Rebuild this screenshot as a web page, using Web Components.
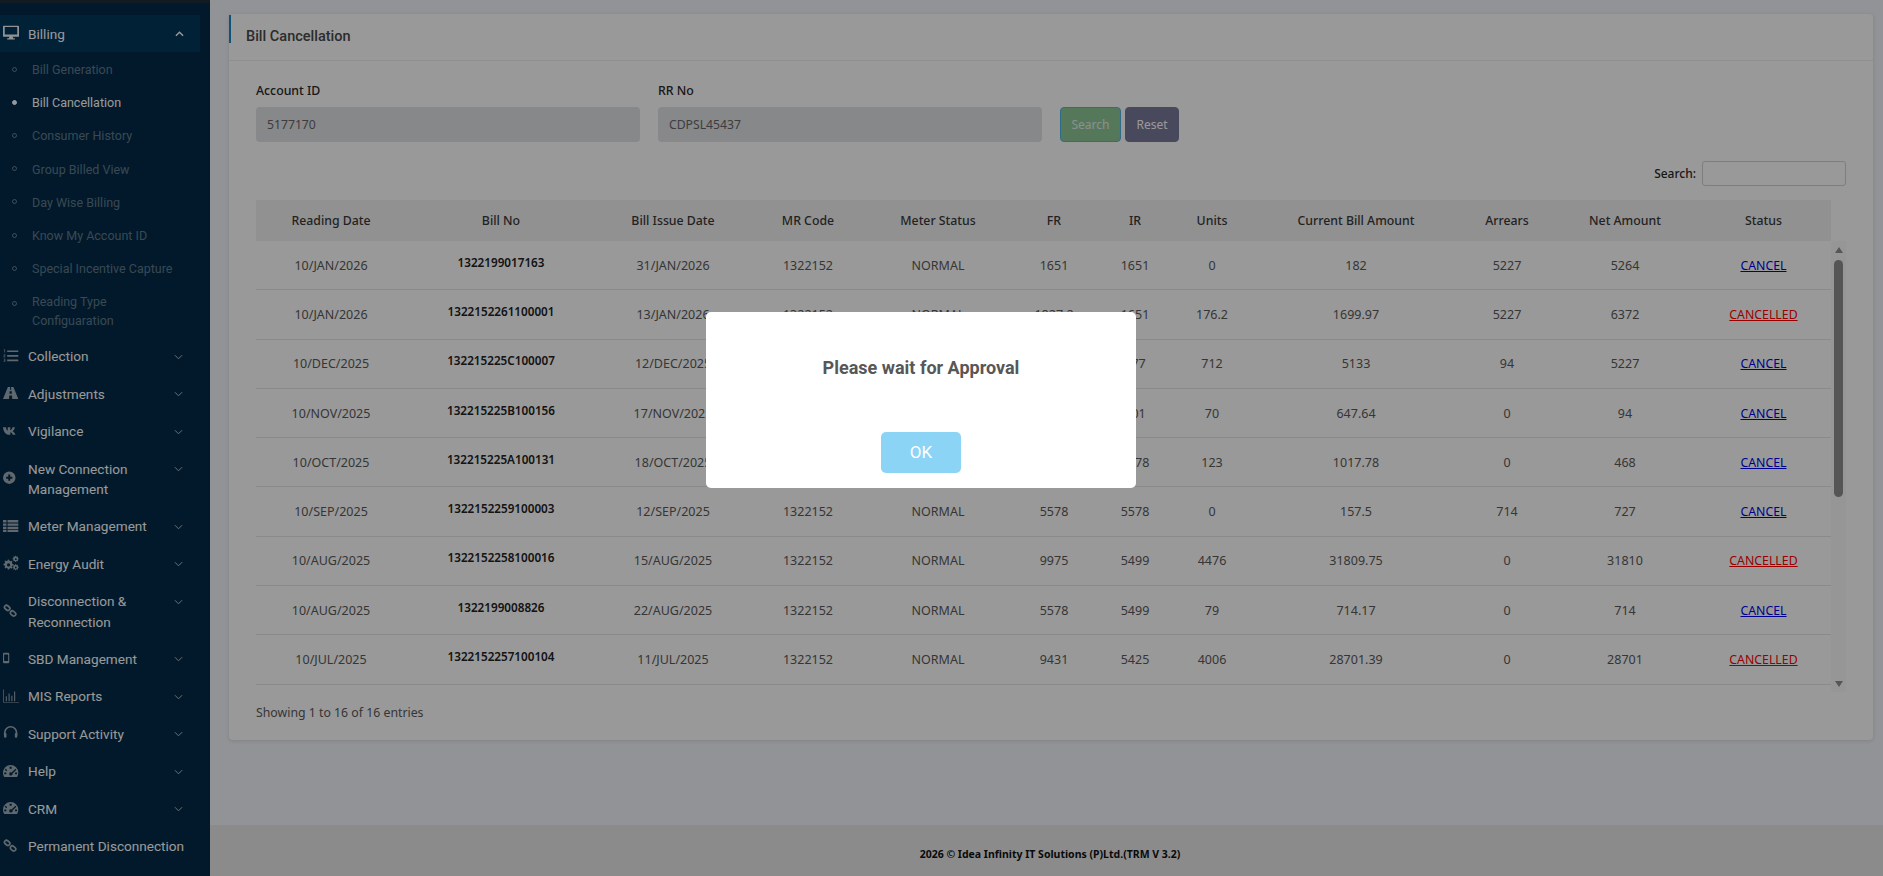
<!DOCTYPE html>
<html lang="en">
<head>
<meta charset="utf-8">
<title>Bill Cancellation</title>
<style>
  html, body { margin: 0; height: 100%; }
  body { font-family: "Noto Sans", sans-serif; overflow: hidden; }
</style>
</head>
<body>
<app-shell>
  <app-sidebar slot="side"></app-sidebar>
  <bill-card slot="main" title-text="Bill Cancellation"></bill-card>
  <app-footer slot="foot">2026 © Idea Infinity IT Solutions (P)Ltd.(TRM V 3.2)</app-footer>
</app-shell>
<alert-modal message="Please wait for Approval" confirm="OK"></alert-modal>

<script>
const ICONS = {
  desktop: `<path fill-rule="evenodd" d="M1 1h21a1 1 0 0 1 1 1v14a1 1 0 0 1-1 1h-8l.6 2.200H17V21H6v-1.800h2.400L9 17H1a1 1 0 0 1-1-1V2a1 1 0 0 1 1-1zm1.500 2v10.500h18V3z"/>`,
  listol: `<path d="M6 3.500h16v2.400H6zM6 10h16v2.400H6zM6 16.500h16v2.400H6z"/><path d="M1 2h2v4.600H2V3H1zM.8 9.500h2.500v2.200H1.800v.7h1.500v.8H.8v-2.200h1.500V10H.8zM.8 15.500h2.500v4.200H.8v-.8h1.500v-.9H1.300v-.7h1v-1H.8z"/>`,
  road: `<path d="M7 3h3.400l-.3 4h1.800l-.3-4H15l7 17h-8.700l-.4-5H9.100l-.4 5H0zm2.500 6-.2 3.600h3.400L12.500 9z"/>`,
  vk: `<path d="M0 6h4.200c.3 2.200 1.300 4.500 2.600 5.200V6h3.700v4.600c1.300-.6 2.700-2.500 3.200-4.600h3.500c-.5 2.800-2.200 4.800-3.500 5.800 1.300.7 3.300 2.400 4.300 5.200h-3.900c-.7-1.800-2.100-3.300-3.600-3.600V17H9.800C4.200 17 .6 13 0 6z"/>`,
  plus: `<path fill-rule="evenodd" d="M9 2a9 9 0 1 1 0 18A9 9 0 0 1 9 2zM7.600 6.500v3.100H4.500v2.800h3.100v3.100h2.800v-3.100h3.100V9.600h-3.100V6.500z"/>`,
  thlist: `<path d="M0 3h5v3.400H0zM6.500 3H22v3.400H6.500zM0 7.800h5v3.400H0zM6.500 7.800H22v3.400H6.500zM0 12.600h5V16H0zM6.500 12.600H22V16H6.500zM0 17.400h5v2.600H0zM6.500 17.400H22v2.600H6.500z"/>`,
  cogs: `<path fill-rule="evenodd" d="M7 6.500l1.800.2.500 1.700 1.500.7 1.500-.9 1.300 1.300-.9 1.500.7 1.500 1.700.5v1.900l-1.700.5-.7 1.500.9 1.500-1.300 1.300-1.500-.9-1.500.7-.5 1.400H7l-.5-1.700-1.500-.7-1.500.9-1.300-1.300.9-1.500-.7-1.500-1.700-.5v-1.900l1.700-.5.7-1.500-.9-1.500 1.300-1.300 1.500.9 1.500-.7zM8 12a2.300 2.300 0 1 0 0 4.600A2.300 2.300 0 0 0 8 12z"/><path fill-rule="evenodd" d="M18 1l.8.1.2 1 1 .5.9-.5.8.8-.5.9.4 1 1 .2v1.200l-1 .2-.4 1 .5.9-.8.8-.9-.5-1 .4-.2 1h-1.200l-.2-1-1-.4-.9.5-.8-.8.5-.9-.4-1-1-.2V4.800l1-.2.4-1-.5-.9.8-.8.9.5 1-.4.200-1zm.4 3.700a1.300 1.300 0 1 0 0 2.600 1.300 1.300 0 0 0 0-2.600z"/><path fill-rule="evenodd" d="M18 13l.8.1.2 1 1 .5.9-.5.8.8-.5.9.4 1 1 .2v1.200l-1 .2-.4 1 .5.9-.8.8-.9-.5-1 .4-.2 1h-1.200l-.2-1-1-.4-.9.5-.8-.8.5-.9-.4-1-1-.2v-1.200l1-.2.4-1-.5-.9.8-.8.9.5 1-.4.200-1zm.4 3.700a1.300 1.300 0 1 0 0 2.600 1.300 1.300 0 0 0 0-2.600z"/>`,
  link: `<g fill="none" stroke="currentColor" stroke-width="2.400"><rect x="-4.200" y="-2.800" width="8.400" height="5.600" rx="2.800" transform="translate(6 7) rotate(40)"/><rect x="-4.200" y="-2.800" width="8.400" height="5.600" rx="2.800" transform="translate(14.500 15) rotate(40)"/></g>`,
  mobile: `<path fill-rule="evenodd" d="M1.500 4h6A1.500 1.500 0 0 1 9 5.500v12A1.500 1.500 0 0 1 7.500 19h-6A1.500 1.500 0 0 1 0 17.500v-12A1.500 1.500 0 0 1 1.500 4zm.1 2.300v9.400h5.800V6.300z"/>`,
  chart: `<path d="M0 2h1v18h22v1H0z"/><path d="M4 12h1.500v7H4zM8 8h1.500v11H8zM12 11h1.500v8H12zM16 5h1.500v14H16z"/>`,
  headset: `<path fill="none" stroke="currentColor" stroke-width="2.400" d="M2.500 15v-4a8.500 8.500 0 0 1 17 0v4"/><rect x="1.500" y="11.500" width="3.500" height="7" rx="1.500"/><rect x="17" y="11.500" width="3.500" height="7" rx="1.500"/>`,
  gauge: `<path fill-rule="evenodd" d="M11 3a11 11 0 0 1 11 11c0 2.400-.7 4.500-2 6.300H2C.7 18.500 0 16.400 0 14A11 11 0 0 1 11 3zM9.500 5.500v2.800h3V5.500zM4 8.300l-1.400 1.400 2 2 1.400-1.400zm14 0l-5.700 5.200a2.400 2.400 0 1 0 1.400 1.600l5.500-5.400zM1.800 13.500v2.800h3v-2.800zm15.400 0v2.800h3v-2.800z"/>`
};

const NAV = [
  { label: "Collection", icon: "listol" },
  { label: "Adjustments", icon: "road" },
  { label: "Vigilance", icon: "vk" },
  { label: "New Connection Management", icon: "plus", two: true },
  { label: "Meter Management", icon: "thlist" },
  { label: "Energy Audit", icon: "cogs" },
  { label: "Disconnection & Reconnection", icon: "link", two: true },
  { label: "SBD Management", icon: "mobile" },
  { label: "MIS Reports", icon: "chart" },
  { label: "Support Activity", icon: "headset" },
  { label: "Help", icon: "gauge" },
  { label: "CRM", icon: "gauge" },
  { label: "Permanent Disconnection", icon: "link", leaf: true }
];

const SUBS = ["Bill Generation", "Bill Cancellation", "Consumer History", "Group Billed View",
  "Day Wise Billing", "Know My Account ID", "Special Incentive Capture", "Reading Type Configuaration"];

const COLS = [150, 190, 154, 116, 144, 88, 74, 80, 208, 94, 142, 135];
const HEAD = ["Reading Date", "Bill No", "Bill Issue Date", "MR Code", "Meter Status", "FR", "IR", "Units",
  "Current Bill Amount", "Arrears", "Net Amount", "Status"];
// only the rows visible in the scroll area
const ROWS = [
  ["10/JAN/2026", "1322199017163", "31/JAN/2026", "1322152", "NORMAL", "1651", "1651", "0", "182", "5227", "5264", "CANCEL"],
  ["10/JAN/2026", "1322152261100001", "13/JAN/2026", "1322152", "NORMAL", "1827.2", "1651", "176.2", "1699.97", "5227", "6372", "CANCELLED"],
  ["10/DEC/2025", "132215225C100007", "12/DEC/2025", "1322152", "NORMAL", "1389", "677", "712", "5133", "94", "5227", "CANCEL"],
  ["10/NOV/2025", "132215225B100156", "17/NOV/2025", "1322152", "NORMAL", "671", "601", "70", "647.64", "0", "94", "CANCEL"],
  ["10/OCT/2025", "132215225A100131", "18/OCT/2025", "1322152", "NORMAL", "5701", "5578", "123", "1017.78", "0", "468", "CANCEL"],
  ["10/SEP/2025", "1322152259100003", "12/SEP/2025", "1322152", "NORMAL", "5578", "5578", "0", "157.5", "714", "727", "CANCEL"],
  ["10/AUG/2025", "1322152258100016", "15/AUG/2025", "1322152", "NORMAL", "9975", "5499", "4476", "31809.75", "0", "31810", "CANCELLED"],
  ["10/AUG/2025", "1322199008826", "22/AUG/2025", "1322152", "NORMAL", "5578", "5499", "79", "714.17", "0", "714", "CANCEL"],
  ["10/JUL/2025", "1322152257100104", "11/JUL/2025", "1322152", "NORMAL", "9431", "5425", "4006", "28701.39", "0", "28701", "CANCELLED"]
];

class AppShell extends HTMLElement {
  constructor() {
    super();
    this.attachShadow({ mode: "open" });
    this.shadowRoot.innerHTML = `
      <style>
        :host { display: grid; grid-template-columns: 210px 1fr; height: 876px; background: #f2f5fa; }
        .side { overflow: hidden; }
        .right { display: flex; flex-direction: column; min-width: 0; }
        .main { flex: 1; padding: 14px 10px 0 19px; min-height: 0; }
      </style>
      <div class="side"><slot name="side"></slot></div>
      <div class="right">
        <div class="main"><slot name="main"></slot></div>
        <slot name="foot"></slot>
      </div>
    `;
  }
}
customElements.define("app-shell", AppShell);

class AppSidebar extends HTMLElement {
  constructor() {
    super();
    this.attachShadow({ mode: "open" });
    const subs = SUBS.map((s, i) => `
      <li class="sub ${i === 1 ? "on" : ""} ${i === 7 ? "two" : ""}"><i></i><span>${s}</span></li>`).join("");
    const items = NAV.map((n) => `
      <li class="item ${n.two ? "two" : ""} ${n.leaf ? "leaf" : ""}">
        <svg class="ic" viewBox="0 0 23 23" fill="currentColor">${ICONS[n.icon]}</svg>
        <span>${n.label.replace("&", "&amp;")}</span>
        ${n.leaf ? "" : `<svg class="car" viewBox="0 0 10 6"><path d="M1 1l4 4 4-4" fill="none" stroke="currentColor" stroke-width="1.100"/></svg>`}
      </li>`).join("");
    this.shadowRoot.innerHTML = `
      <style>
        :host { display: block; height: 876px; background: #022b48; font-family: Roboto, sans-serif; color: #fff; border-top: 3px solid #1f2c3c; box-sizing: border-box; }
        ul { list-style: none; margin: 0; padding: 0; }
        .top { display: flex; align-items: center; height: 37px; margin: 12px 10px 0 0; background: #02375d; font-size: 13.600px; position: relative; }
        .top span { margin-left: 28px; }
        .top .ic { opacity: .95; left: 3px; top: 10px; margin: 0; }
        .ic { width: 16px; height: 16px; flex: none; position: absolute; left: 3px; top: 50%; margin-top: -9px; opacity: .62; }
        .car { width: 9px; height: 6px; position: absolute; right: 27px; color: #fff; }
        .top .car { right: 16px; top: 16px; }
        .subs { padding-top: 1px; }
        .items { padding-top: .5px; }
        .sub { position: relative; min-height: 33.200px; display: flex; align-items: center; padding-left: 32px; font-size: 12.500px; line-height: 19px; color: rgba(255,255,255,.38); }
        .sub span { white-space: nowrap; }
        .sub.two { min-height: 52px; }
        .sub.two span { white-space: normal; width: 110px; }
        .sub i { position: absolute; left: 12px; top: 50%; margin-top: -3px; width: 3px; height: 3px; border: 1px solid currentColor; border-radius: 50%; }
        .sub.two i { top: 19px; }
        .sub.on { color: #fff; }
        .sub.on i { background: #fff; }
        .item { position: relative; display: flex; align-items: center; min-height: 37.500px; padding-left: 28px; font-size: 13.600px; line-height: 20.400px; color: #fff; }
        .item span { width: 130px; }
        .item.leaf span { width: auto; white-space: nowrap; }
        .item.two { min-height: 57.500px; }
        .item .car { top: 16px; opacity: .7; }
      </style>
      <div class="top">
        <svg class="ic" viewBox="0 0 23 23" fill="currentColor">${ICONS.desktop}</svg>
        <span>Billing</span>
        <svg class="car" viewBox="0 0 10 6"><path d="M1 5l4-4 4 4" fill="none" stroke="currentColor" stroke-width="1.600"/></svg>
      </div>
      <ul class="subs">${subs}</ul>
      <ul class="items">${items}</ul>
    `;
  }
}
customElements.define("app-sidebar", AppSidebar);

class FormField extends HTMLElement {
  constructor() {
    super();
    this.attachShadow({ mode: "open" });
    this.shadowRoot.innerHTML = `
      <style>
        :host { display: block; width: 384px; }
        label { display: block; font-size: 12.300px; font-weight: 500; line-height: 18px; color: #2a2a2a; margin-bottom: 7px; }
        input { display: block; box-sizing: border-box; width: 100%; height: 35px; padding: 0 11px; border: 0; border-radius: 4px; background: #e2e3e6; font: 12.200px "Noto Sans", sans-serif; color: #666; }
      </style>
      <label>${this.getAttribute("label")}</label>
      <input value="${this.getAttribute("value")}" disabled>
    `;
  }
}
customElements.define("form-field", FormField);

class BillsTable extends HTMLElement {
  constructor() {
    super();
    this.attachShadow({ mode: "open" });
    const colgroup = `<colgroup>${COLS.map((w) => `<col style="width:${w}px">`).join("")}</colgroup>`;
    const head = HEAD.map((h) => `<th>${h}</th>`).join("");
    const rows = ROWS.map((r) => `<tr>${r.map((c, i) => {
      if (i === 1) return `<td><b>${c}</b></td>`;
      if (i === 11) return `<td><a class="${c === "CANCEL" ? "go" : "done"}">${c}</a></td>`;
      return `<td>${c}</td>`;
    }).join("")}</tr>`).join("");
    this.shadowRoot.innerHTML = `
      <style>
        :host { display: block; font-size: 12.500px; color: #5a5a5a; }
        .tools { display: flex; justify-content: flex-end; align-items: center; gap: 6px; height: 25px; font-size: 12px; font-weight: 500; color: #2a2a2a; margin-bottom: 14px; }
        .tools input { box-sizing: border-box; width: 144px; height: 25px; border: 1px solid #d3d3d3; border-radius: 3px; background: transparent; }
        table { table-layout: fixed; border-collapse: collapse; width: 1575px; }
        th { height: 41px; padding: 0; background: #f2f2f2; font-size: 12.300px; font-weight: 500; color: #3a3a3a; text-align: center; }
        td { height: 48.300px; padding: 0; text-align: center; border-bottom: 1px solid #e6e6e6; }
        td b { position: relative; top: -3px; font-size: 11.700px; font-weight: 600; color: #222; }
        a { text-decoration: underline; font-size: 12.300px; }
        a.go { color: #0000ee; }
        a.done { color: #ff0000; }
        .wrap { display: flex; height: 451px; align-items: flex-start; }
        .bar { width: 15px; height: 100%; background: #fbfbfb; display: flex; flex-direction: column; align-items: center; padding-top: 6px; box-sizing: border-box; }
        .bar i { display: block; width: 0; height: 0; border: 4.500px solid transparent; border-top: 0; border-bottom: 6px solid #8f8f8f; }
        .bar i.dn { border-bottom: 0; border-top: 6px solid #8f8f8f; margin-top: auto; margin-bottom: 5px; }
        .bar u { display: block; width: 9px; height: 237px; margin-top: 7px; border-radius: 5px; background: #8e8e8e; }
        .note { margin-top: 12px; font-size: 12.300px; line-height: 18px; color: #5a5a5a; }
      </style>
      <div class="tools"><span>Search:</span><input></div>
      <table>${colgroup}<tr>${head}</tr></table>
      <div class="wrap">
        <table>${colgroup}${rows}</table>
        <div class="bar"><i></i><u></u><i class="dn"></i></div>
      </div>
      <div class="note">Showing 1 to 16 of 16 entries</div>
    `;
  }
}
customElements.define("bills-table", BillsTable);

class BillCard extends HTMLElement {
  constructor() {
    super();
    this.attachShadow({ mode: "open" });
    this.shadowRoot.innerHTML = `
      <style>
        :host { display: block; height: 726px; background: #fff; border-radius: 4px; box-shadow: 0 1px 4px rgba(0,0,0,.12); }
        .hd { position: relative; box-sizing: border-box; height: 47px; padding-bottom: 2px; display: flex; align-items: center; padding-left: 17px; border-bottom: 1px solid #eee; font: 500 14.500px Roboto, sans-serif; color: #4a4a4a; }
        .hd::before { content: ""; position: absolute; left: 0; top: 1px; width: 2px; height: 28px; background: #1f87c9; }
        .bd { padding: 21px 27px 0; }
        .form { display: flex; gap: 18px; align-items: flex-end; margin-bottom: 19px; }
        .btns { display: flex; gap: 4px; }
        button { height: 35px; border: 1px solid transparent; border-radius: 4px; padding: 0; color: #fff; font: 12px "Noto Sans", sans-serif; }
        .s { width: 61px; background: #8ec996; border-color: #50b4e6; color: #ededed; }
        .r { width: 54px; background: #787b99; border-color: #787b99; }
      </style>
      <div class="hd">${this.getAttribute("title-text")}</div>
      <div class="bd">
        <div class="form">
          <form-field label="Account ID" value="5177170"></form-field>
          <form-field label="RR No" value="CDPSL45437"></form-field>
          <div class="btns"><button class="s">Search</button><button class="r">Reset</button></div>
        </div>
        <bills-table></bills-table>
      </div>
    `;
  }
}
customElements.define("bill-card", BillCard);

class AppFooter extends HTMLElement {
  constructor() {
    super();
    this.attachShadow({ mode: "open" });
    this.shadowRoot.innerHTML = `
      <style>
        :host { display: flex; height: 51px; flex: none; align-items: center; justify-content: center; background: #e8e8e8; font: 700 10.500px "Noto Sans", sans-serif; color: #111; box-sizing: border-box; padding: 6px 0 0 7px; }
      </style>
      <slot></slot>
    `;
  }
}
customElements.define("app-footer", AppFooter);

class AlertModal extends HTMLElement {
  constructor() {
    super();
    this.attachShadow({ mode: "open" });
    this.shadowRoot.innerHTML = `
      <style>
        :host { position: fixed; inset: 0; background: rgba(0,0,0,.4); }
        .box { position: absolute; left: 706px; top: 312px; box-sizing: border-box; width: 430px; height: 176px; background: #fff; border-radius: 5px; display: flex; flex-direction: column; align-items: center; font-family: Roboto, sans-serif; }
        h2 { margin: 45px 0 0; font-size: 18px; line-height: 22px; font-weight: 700; color: #575757; }
        button { margin-top: 53px; width: 80px; height: 41px; border: 0; border-radius: 5px; background: #8cd4f5; color: #fff; font: 17px Roboto, sans-serif; padding: 0 0 2px; }
      </style>
      <div class="box">
        <h2>${this.getAttribute("message")}</h2>
        <button>${this.getAttribute("confirm")}</button>
      </div>
    `;
  }
}
customElements.define("alert-modal", AlertModal);
</script>
</body>
</html>
